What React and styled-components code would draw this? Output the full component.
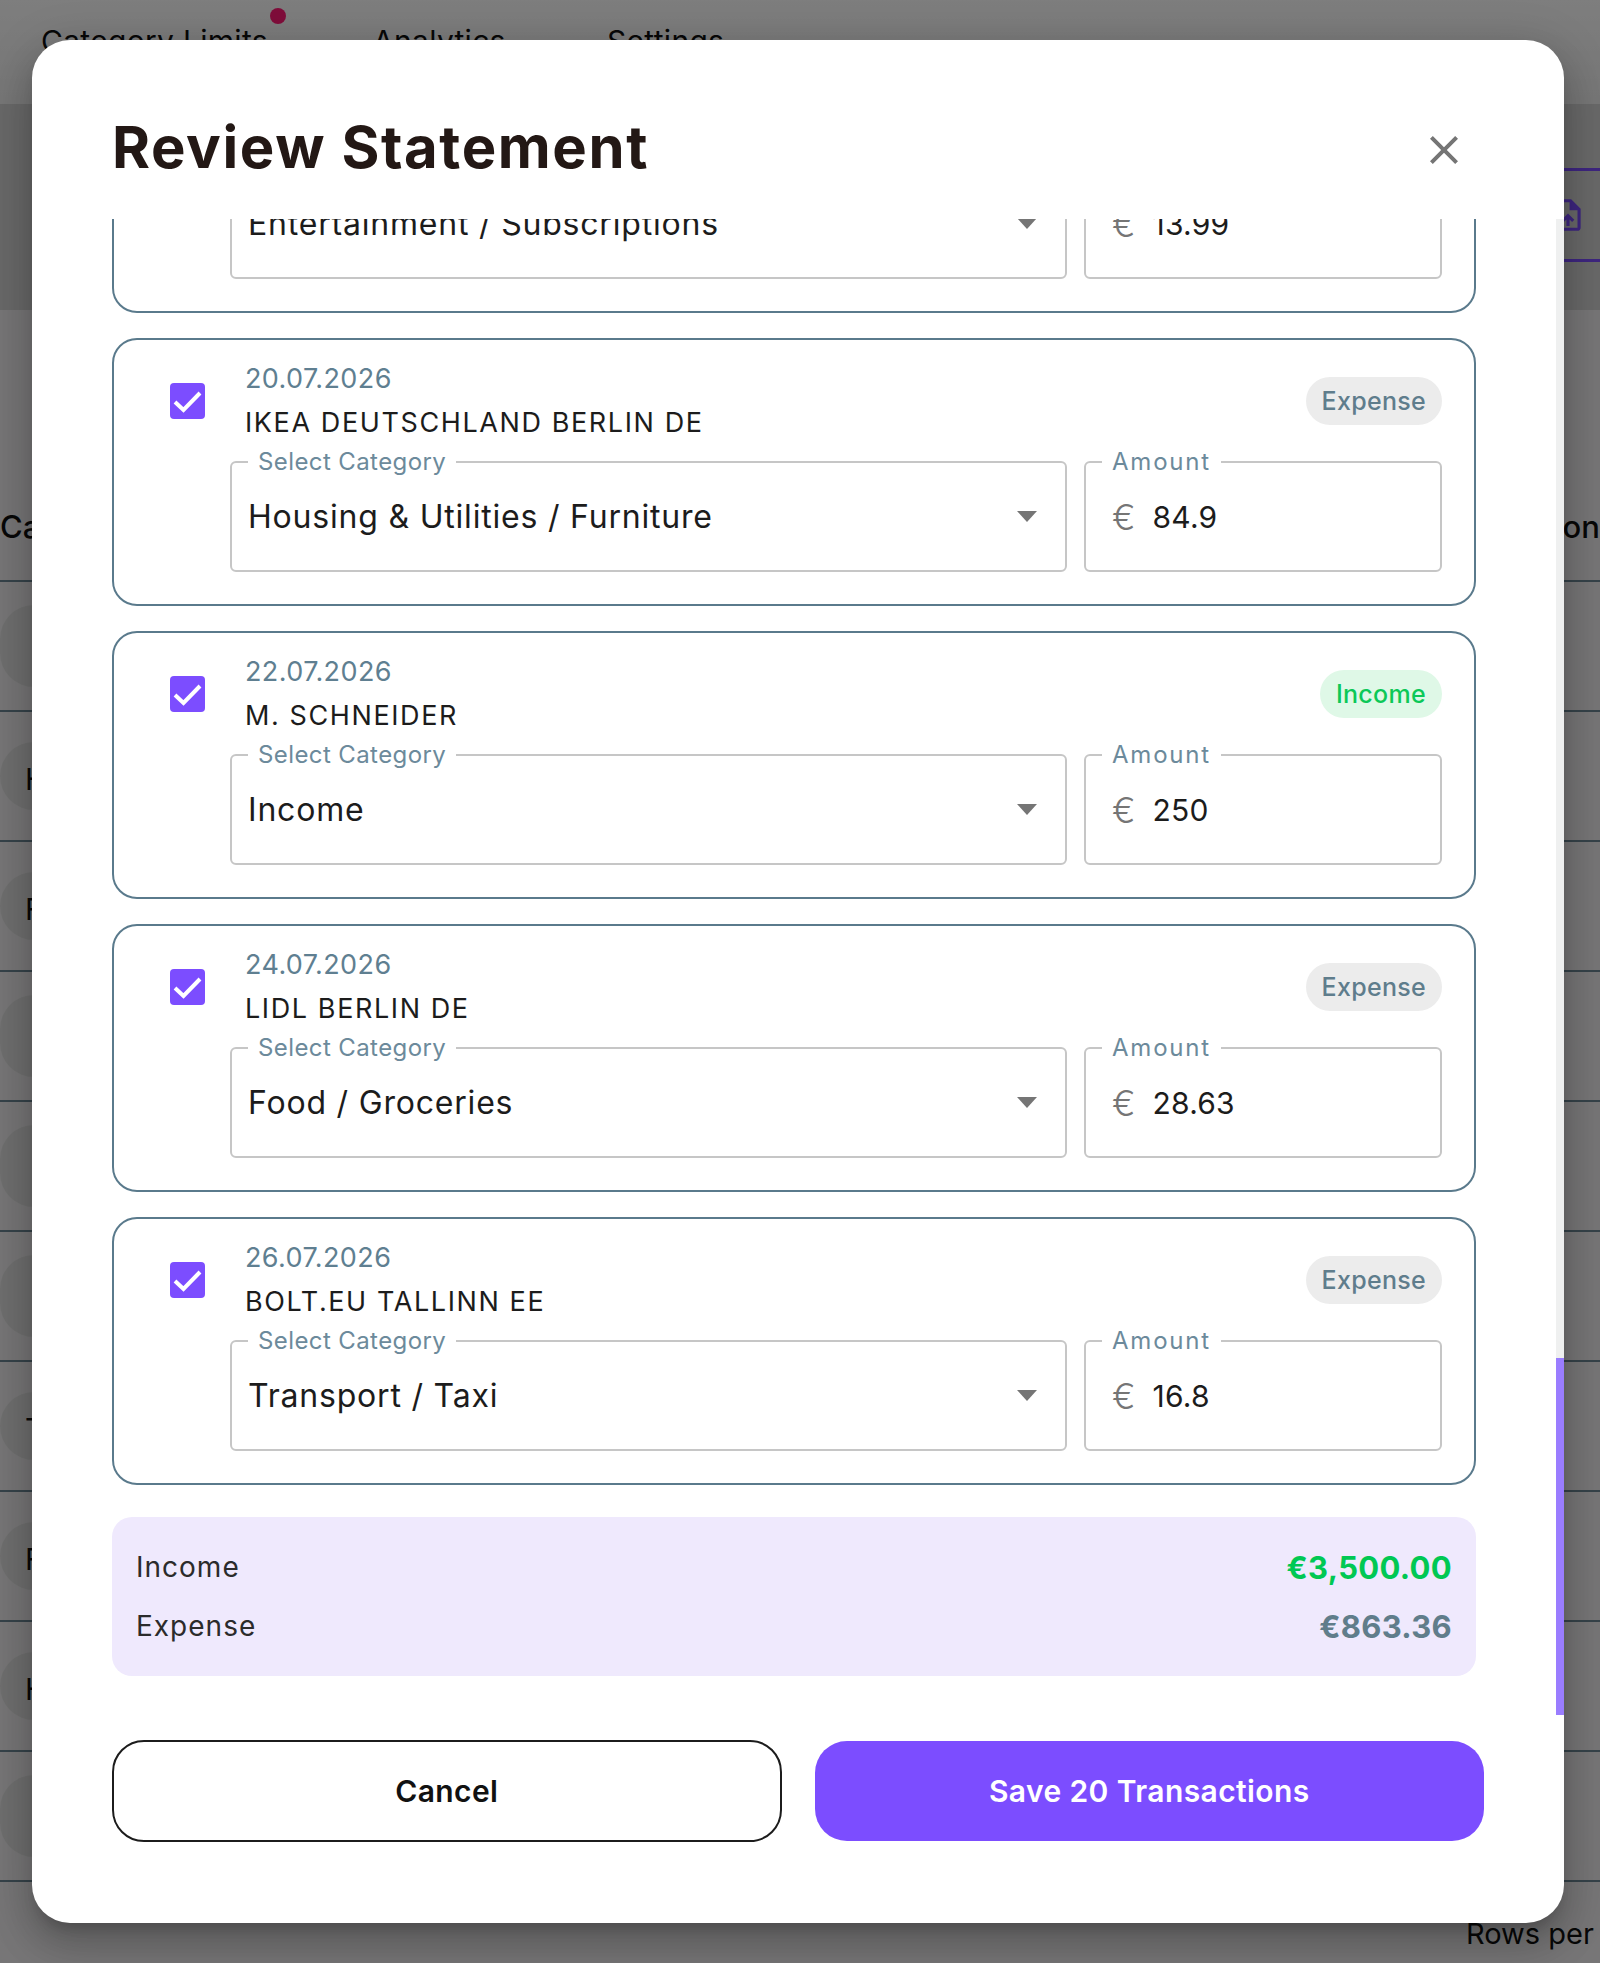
import React, { useLayoutEffect, useRef } from 'react'
import styled, { createGlobalStyle } from 'styled-components'

const GlobalStyle = createGlobalStyle`
  html, body {
    margin: 0;
    padding: 0;
    background: #fff;
    font-family: Inter, "Noto Sans", "Liberation Sans", sans-serif;
  }
  * { box-sizing: border-box; }
`

const Page = styled.div`
  position: relative;
  width: 1600px;
  height: 1963px;
  overflow: hidden;
  color: #111;
`

// page behind the dialog
const Nav = styled.nav`
  height: 104px;
  display: flex;
  padding: 20px 0 0 41px;
  background: linear-gradient(#fcfcfc, #eee);
`
const NavItem = styled.span`
  position: relative;
  width: ${p => p.w}px;
  font-size: 30px;
  letter-spacing: 0.3px;
  line-height: 42px;
`
const Dot = styled.i`
  position: absolute;
  top: -12px;
  left: 229px;
  width: 16px;
  height: 16px;
  border-radius: 50%;
  background: #ff1a75;
`
const Toolbar = styled.div`
  height: 206px;
  padding-top: 64px;
  display: flex;
  justify-content: flex-end;
  background: #d2d2d2;
`
const UploadButton = styled.div`
  width: 100px;
  height: 94px;
  margin-right: -40px;
  padding-left: 6px;
  display: flex;
  align-items: center;
  border: 3px solid #7c4dff;
  color: #7c4dff;
`
const TableHead = styled.div`
  height: 272px;
  display: flex;
  justify-content: space-between;
  align-items: flex-end;
  padding-bottom: 33px;
  background: #eeedee;
  border-bottom: 2px solid #6d8794;
  font-size: 31px;
  font-weight: 500;
  line-height: 40px;
`
const TableRow = styled.div`
  height: 130px;
  display: flex;
  align-items: center;
  background: #eeedee;
  border-bottom: 2px solid #6d8794;
`
const Chip = styled.span`
  width: 240px;
  height: ${p => (p.tall ? 82 : 68)}px;
  padding: 6px 0 0 25px;
  border-radius: 34px;
  display: flex;
  align-items: center;
  background: #dfdfdf;
  font-size: 30px;
`
const TableFoot = styled.div`
  padding: 32px 0 0 1466px;
  background: #eeedee;
  height: 90px;
  font-size: 29px;
  line-height: 40px;
  white-space: nowrap;
`

// dialog
const Overlay = styled.div`
  position: absolute;
  inset: 0;
  display: flex;
  padding: 40px 36px 40px 32px;
  background: rgba(0, 0, 0, 0.5);
`
const Modal = styled.div`
  flex: 1;
  min-width: 0;
  display: flex;
  flex-direction: column;
  overflow: hidden;
  background: #fff;
  border-radius: 38px;
  box-shadow: 0 11px 15px -7px rgba(0, 0, 0, 0.2), 0 24px 38px 3px rgba(0, 0, 0, 0.14), 0 9px 46px 8px rgba(0, 0, 0, 0.12);
`
const Header = styled.header`
  height: 179px;
  flex: none;
  padding: 40px 96px 0 80px;
  display: flex;
  align-items: center;
  justify-content: space-between;
`
const Title = styled.h2`
  margin: -5px 0 0;
  font-size: 58px;
  font-weight: 700;
  letter-spacing: 1.6px;
  color: #231815;
`
const CloseIcon = styled.svg`
  width: 48px;
  height: 48px;
  fill: #757575;
`
const ScrollWrap = styled.div`
  position: relative;
  flex: 1;
  min-height: 0;
  display: flex;
`
const ScrollArea = styled.div`
  flex: 1;
  min-width: 0;
  overflow: hidden;
  padding: 0 88px 39px 80px;
`
const ScrollTrack = styled.div`
  position: absolute;
  top: 0;
  right: 0;
  bottom: 0;
  width: 8px;
  background: #eff0f0;
`
const ScrollThumb = styled.div`
  position: absolute;
  left: 0;
  right: 0;
  bottom: 0;
  height: 357px;
  background: #9a7dff;
`
const CardList = styled.div`
  display: flex;
  flex-direction: column;
  gap: 25px;
`
const Card = styled.div`
  height: 268px;
  padding: 18px 32px 0 56px;
  border: 2px solid #5a7a8c;
  border-radius: 25px;
`
const CardHead = styled.div`
  height: 89px;
  display: flex;
  align-items: flex-start;
`
const CheckBox = styled.span`
  flex: none;
  width: 35px;
  height: 36px;
  margin: 25px 40px 0 0;
  border-radius: 4px;
  background: #7c4dff;
  display: flex;
`
const Info = styled.div`
  flex: 1;
  min-width: 0;
`
const DateText = styled.div`
  height: 42px;
  font-size: 27px;
  letter-spacing: 0.4px;
  line-height: 42px;
  color: #5f7f91;
`
const Name = styled.div`
  height: 44px;
  font-size: 27px;
  letter-spacing: 1.6px;
  line-height: 46px;
  color: #1c1c1c;
`
const Badge = styled.span`
  flex: none;
  height: 48px;
  margin-top: 19px;
  padding: 0 16px;
  border-radius: 24px;
  display: flex;
  align-items: center;
  font-size: 25px;
  font-weight: 500;
  letter-spacing: 0.3px;
  color: ${p => (p.income ? '#0cc858' : '#5f7d8c')};
  background: ${p => (p.income ? '#dff8e7' : '#ececec')};
`
const Fields = styled.div`
  margin-left: 60px;
  display: flex;
  gap: 17px;
`
const Field = styled.fieldset`
  width: ${p => p.w}px;
  height: 125px;
  margin: 0;
  padding: 0 28px 14px 16px;
  display: flex;
  align-items: center;
  border: 2px solid #c6c6c6;
  border-radius: 6px;
`
const Legend = styled.legend`
  padding: 0 10px;
  font-size: 24px;
  letter-spacing: ${p => p.spacing}px;
  line-height: 30px;
  color: #6c8a9b;
`
const Value = styled.span`
  flex: 1;
  font-size: 32px;
  letter-spacing: 0.8px;
  line-height: 40px;
  color: #1c1c1c;
`
const AmountValue = styled(Value)`
  font-size: 30px;
  letter-spacing: 0.2px;
`
const Euro = styled.span`
  margin: 0 17px 0 10px;
  font-size: 35px;
  font-weight: 300;
  line-height: 40px;
  color: #757575;
`
const Caret = styled.i`
  width: 0;
  height: 0;
  border-left: 10px solid transparent;
  border-right: 10px solid transparent;
  border-top: 11px solid #757575;
`
const Summary = styled.div`
  height: 159px;
  margin-top: 32px;
  padding: 0 24px;
  display: flex;
  flex-direction: column;
  justify-content: center;
  border-radius: 20px;
  background: #efe9fd;
`
const SummaryRow = styled.div`
  height: 59px;
  display: flex;
  align-items: center;
  justify-content: space-between;
  font-size: 28px;
  letter-spacing: 1px;
  color: #2b2b2b;
`
const Total = styled.b`
  font-size: 31px;
  font-weight: 700;
  letter-spacing: 0.3px;
  color: ${p => (p.income ? '#00c853' : '#607d8b')};
`
const Footer = styled.footer`
  flex: none;
  height: 208px;
  padding: 25px 80px 0;
  display: grid;
  grid-template-columns: 1fr 1fr;
  align-items: start;
  gap: 33px;
`
const Button = styled.button`
  height: ${p => (p.primary ? 100 : 102)}px;
  margin-top: ${p => (p.primary ? 1 : 0)}px;
  padding: 0;
  border: ${p => (p.primary ? 'none' : '2px solid #1c1c1c')};
  border-radius: 32px;
  font-family: inherit;
  font-size: 30px;
  font-weight: 600;
  letter-spacing: 0.4px;
  color: ${p => (p.primary ? '#fff' : '#111')};
  background: ${p => (p.primary ? '#7c4dff' : '#fff')};
`

const rows = [
  { date: '', name: '', category: 'Entertainment / Subscriptions', amount: '13.99' },
  { date: '20.07.2026', name: 'IKEA DEUTSCHLAND BERLIN DE', type: 'Expense', category: 'Housing & Utilities / Furniture', amount: '84.9' },
  { date: '22.07.2026', name: 'M. SCHNEIDER', type: 'Income', category: 'Income', amount: '250' },
  { date: '24.07.2026', name: 'LIDL BERLIN DE', type: 'Expense', category: 'Food / Groceries', amount: '28.63' },
  { date: '26.07.2026', name: 'BOLT.EU TALLINN EE', type: 'Expense', category: 'Transport / Taxi', amount: '16.8' }
]

const chips = [
  { tall: true },
  { letter: 'H' },
  { letter: 'F' },
  { tall: true },
  { tall: true },
  { tall: true },
  { letter: 'T' },
  { letter: 'F' },
  { letter: 'H' },
  { tall: true }
]

const TransactionCard = ({ row }) => (
  <Card>
    <CardHead>
      <CheckBox>
        <svg width='35' height='36' viewBox='0 0 35 36'>
          <path d='M5 19l8.5 8L30 10' fill='none' stroke='#fff' strokeWidth='4' />
        </svg>
      </CheckBox>
      <Info>
        <DateText>{row.date}</DateText>
        <Name>{row.name}</Name>
      </Info>
      {row.type && <Badge income={row.type === 'Income'}>{row.type}</Badge>}
    </CardHead>
    <Fields>
      <Field w={837}>
        <Legend spacing={0.4}>Select Category</Legend>
        <Value>{row.category}</Value>
        <Caret />
      </Field>
      <Field w={358}>
        <Legend spacing={1.8}>Amount</Legend>
        <Euro>€</Euro>
        <AmountValue>{row.amount}</AmountValue>
      </Field>
    </Fields>
  </Card>
)

export default function App() {
  const scrollRef = useRef(null)

  useLayoutEffect(() => {
    scrollRef.current.scrollTop = scrollRef.current.scrollHeight
  }, [])

  return (
    <Page>
      <GlobalStyle />
      <Nav>
        <NavItem w={332}>
          Category Limits
          <Dot />
        </NavItem>
        <NavItem w={234}>Analytics</NavItem>
        <NavItem w={200}>Settings</NavItem>
      </Nav>
      <Toolbar>
        <UploadButton>
          <svg width='38' height='38' viewBox='0 0 24 24' fill='currentColor'>
            <path d='M14 2H6c-1.1 0-1.99.9-1.99 2L4 20c0 1.1.89 2 1.99 2H18c1.1 0 2-.9 2-2V8l-6-6zm4 18H6V4h7v5h5v11zM8 15.01l1.41 1.41L11 14.84V19h2v-4.16l1.59 1.59L16 15.01 12.01 11 8 15.01z' />
          </svg>
        </UploadButton>
      </Toolbar>
      <TableHead>
        <span>Category</span>
        <span>Action</span>
      </TableHead>
      {chips.map((chip, i) => (
        <TableRow key={i}>
          <Chip tall={chip.tall}>{chip.letter}</Chip>
        </TableRow>
      ))}
      <TableFoot>Rows per</TableFoot>

      <Overlay>
        <Modal>
          <Header>
            <Title>Review Statement</Title>
            <CloseIcon viewBox='0 0 24 24'>
              <path d='M19 6.41 17.59 5 12 10.59 6.41 5 5 6.41 10.59 12 5 17.59 6.41 19 12 13.41 17.59 19 19 17.59 13.41 12z' />
            </CloseIcon>
          </Header>
          <ScrollWrap>
            <ScrollArea ref={scrollRef}>
              <CardList>
                {rows.map((row, i) => (
                  <TransactionCard key={i} row={row} />
                ))}
              </CardList>
              <Summary>
                <SummaryRow>
                  Income
                  <Total income>€3,500.00</Total>
                </SummaryRow>
                <SummaryRow>
                  Expense
                  <Total>€863.36</Total>
                </SummaryRow>
              </Summary>
            </ScrollArea>
            <ScrollTrack>
              <ScrollThumb />
            </ScrollTrack>
          </ScrollWrap>
          <Footer>
            <Button>Cancel</Button>
            <Button primary>Save 20 Transactions</Button>
          </Footer>
        </Modal>
      </Overlay>
    </Page>
  )
}
